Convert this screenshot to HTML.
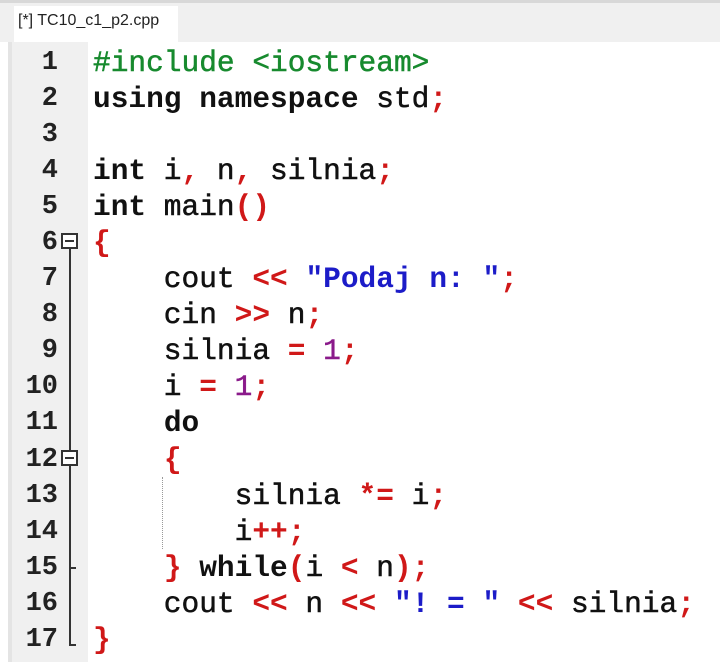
<!DOCTYPE html>
<html><head><meta charset="utf-8"><style>
body{margin:0;width:720px;height:662px;background:#fff;overflow:hidden;position:relative;font-family:"Liberation Mono",monospace;}
.top{position:absolute;left:0;top:0;width:720px;height:42px;background:#f0f0f0;}
.topline{position:absolute;left:0;top:0;width:720px;height:3px;background:#d8d8d8;}
.tab{position:absolute;left:14px;top:6px;width:164px;height:36px;background:#fff;font-family:"Liberation Sans",sans-serif;font-size:16px;color:#222;line-height:30px;padding-left:4px;box-sizing:border-box;}
.lborder{position:absolute;left:8px;top:42px;width:4px;height:620px;background:#e4e4e4;}
.gutter{position:absolute;left:12px;top:42px;width:76px;height:620px;background:#f0f0f0;}
.nums{position:absolute;left:12px;top:45px;width:46px;text-align:right;font-size:27px;font-weight:bold;color:#222;line-height:36.05px;}
.code{position:absolute;left:93px;top:45px;font-size:29.5px;line-height:36.05px;white-space:pre;color:#111;-webkit-text-stroke:0.5px #111;}
.k{font-weight:bold;-webkit-text-stroke:0}
.g{color:#178a2e;-webkit-text-stroke:0.5px #178a2e}
.r{color:#d01818;font-weight:bold;-webkit-text-stroke:0}
.b{color:#1c1cc8;font-weight:bold;-webkit-text-stroke:0}
.p{color:#8a1a8a;-webkit-text-stroke:0.5px #8a1a8a}
.fold{position:absolute;width:17px;height:16px;border:2px solid #333;background:#fff;box-sizing:border-box;}
.fold:after{content:"";position:absolute;left:2px;right:2px;top:5px;height:2px;background:#333;}
.vl{position:absolute;width:2px;background:#333;}
.hl{position:absolute;height:2px;background:#333;}
</style></head><body>
<div class="top"></div><div class="topline"></div>
<div class="tab">[*] TC10_c1_p2.cpp</div>
<div class="lborder"></div>
<div class="gutter"></div>
<div class="nums">1<br>2<br>3<br>4<br>5<br>6<br>7<br>8<br>9<br>10<br>11<br>12<br>13<br>14<br>15<br>16<br>17</div>
<div class="fold" style="left:61px;top:233px"></div>
<div class="vl" style="left:69px;top:249px;height:396px"></div>
<div class="fold" style="left:61px;top:450px"></div>
<div class="hl" style="left:69px;top:567px;width:7px"></div>
<div class="hl" style="left:69px;top:644px;width:7px"></div>
<div style="position:absolute;left:162px;top:477px;height:72px;border-left:1px dotted #999"></div>
<div class="code"><span class="g">#include &lt;iostream&gt;</span>
<span class="k">using namespace</span> std<span class="r">;</span>

<span class="k">int</span> i<span class="r">,</span> n<span class="r">,</span> silnia<span class="r">;</span>
<span class="k">int</span> main<span class="r">()</span>
<span class="r">{</span>
    cout <span class="r">&lt;&lt;</span> <span class="b">"Podaj n: "</span><span class="r">;</span>
    cin <span class="r">&gt;&gt;</span> n<span class="r">;</span>
    silnia <span class="r">=</span> <span class="p">1</span><span class="r">;</span>
    i <span class="r">=</span> <span class="p">1</span><span class="r">;</span>
    <span class="k">do</span>
    <span class="r">{</span>
        silnia <span class="r">*=</span> i<span class="r">;</span>
        i<span class="r">++;</span>
    <span class="r">}</span> <span class="k">while</span><span class="r">(</span>i <span class="r">&lt;</span> n<span class="r">);</span>
    cout <span class="r">&lt;&lt;</span> n <span class="r">&lt;&lt;</span> <span class="b">"! = "</span> <span class="r">&lt;&lt;</span> silnia<span class="r">;</span>
<span class="r">}</span></div>
</body></html>
